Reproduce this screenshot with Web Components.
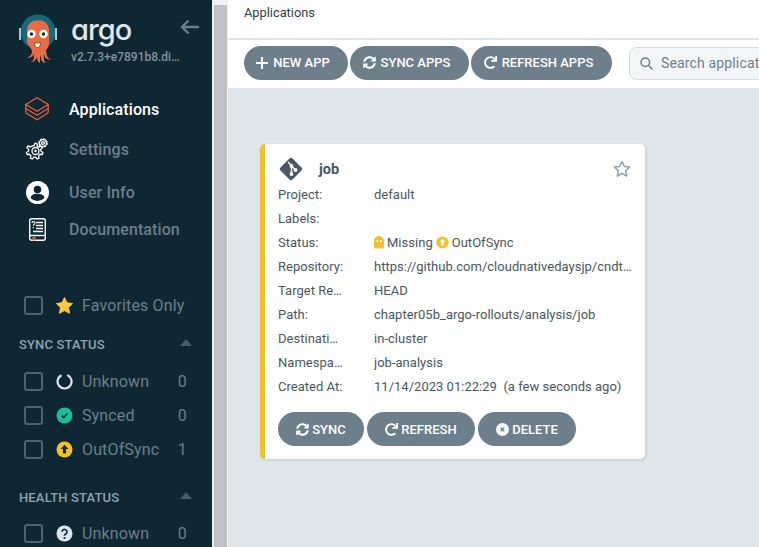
<!DOCTYPE html>
<html lang="en"><head><meta charset="utf-8"><title>Argo CD</title>
<style>
html,body{margin:0;height:100%;overflow:hidden;background:#fff;font-family:Roboto,"Liberation Sans",sans-serif}
</style></head><body>
<argo-app></argo-app>
<script>
const SYNC='M370.72 133.28C339.458 104.008 298.888 87.962 255.848 88c-77.458.068-144.328 53.178-162.791 126.85-1.344 5.363-6.122 9.15-11.651 9.15H24.103c-7.498 0-13.194-6.807-11.807-14.176C33.933 94.924 134.813 8 256 8c66.448 0 126.791 26.136 171.315 68.685L463.03 40.97C478.149 25.851 504 36.559 504 57.941V192c0 13.255-10.745 24-24 24H345.941c-21.382 0-32.09-25.851-16.971-40.971l41.75-41.749zM32 296h134.059c21.382 0 32.09 25.851 16.971 40.971l-41.75 41.75c31.262 29.273 71.835 45.319 114.876 45.28 77.418-.07 144.315-53.144 162.787-126.849 1.344-5.363 6.122-9.15 11.651-9.15h57.304c7.498 0 13.194 6.807 11.807 14.176C478.067 417.076 377.187 504 256 504c-66.448 0-126.791-26.136-171.315-68.685L48.97 471.03C33.851 486.149 8 475.441 8 454.059V320c0-13.255 10.745-24 24-24z';
const REDO='M500.33 0h-47.41a12 12 0 0 0-12 12.57l4 82.76A247.42 247.42 0 0 0 256 8C119.34 8 7.9 119.53 8 256.19 8.1 393.07 119.1 504 256 504a247.1 247.1 0 0 0 166.18-63.91 12 12 0 0 0 .48-17.43l-34-34a12 12 0 0 0-16.38-.55A176 176 0 1 1 402.1 157.8l-101.53-4.87a12 12 0 0 0-12.57 12v47.41a12 12 0 0 0 12 12h200.33a12 12 0 0 0 12-12V12a12 12 0 0 0-12-12z';
const fa=(d,s=13)=>`<svg slot="icon" width="${s}" height="${s}" viewBox="0 0 512 512" fill="#fff"><path d="${d}"/></svg>`;
const icons={
 plus:`<svg slot="icon" width="12" height="12" viewBox="0 0 12 12"><path d="M6 .5v11M.5 6h11" stroke="#fff" stroke-width="2" stroke-linecap="round"/></svg>`,
 sync:fa(SYNC),redo:fa(REDO),
 del:`<svg slot="icon" width="13" height="13" viewBox="0 0 13 13"><circle cx="6.5" cy="6.5" r="6.5" fill="#fff"/><path d="M4.7 4.7l3.6 3.6M8.3 4.7L4.7 8.3" stroke="#6d7f8b" stroke-width="1.3"/></svg>`,
 notch:`<svg width="17" height="17" viewBox="0 0 17 17"><path d="M11.2 2A7 7 0 1 1 5.5 2.2" fill="none" stroke="#dee6eb" stroke-width="2.2"/></svg>`,
 synced:`<svg width="17" height="17" viewBox="0 0 17 17"><circle cx="8.5" cy="8.5" r="8" fill="#18be94"/><path d="M5.6 8.6l2 2 3.8-4" fill="none" stroke="#10303d" stroke-width="1.5"/></svg>`,
 out:c=>`<svg width="17" height="17" viewBox="0 0 17 17"><circle cx="8.5" cy="8.5" r="8" fill="#f4c030"/><path d="M8.5 3.8l4 4.2H10v4.4H7V8H4.5z" fill="${c}"/></svg>`,
 help:`<svg width="17" height="17" viewBox="0 0 17 17"><circle cx="8.5" cy="8.5" r="8" fill="#dee6eb"/><path d="M6 6.8a2.5 2.4 0 1 1 3.8 2.1c-.9.5-1.3.9-1.3 1.8" fill="none" stroke="#10303d" stroke-width="1.7"/><circle cx="8.5" cy="13" r="1.1" fill="#10303d"/></svg>`
};
function define(name,css,html,init){
 customElements.define(name,class extends HTMLElement{
  connectedCallback(){
   if(this.shadowRoot)return;
   const r=this.attachShadow({mode:'open'});
   r.innerHTML=`<style>${css}</style>`+(typeof html==='function'?html(this):html);
   init&&init(r,this);
  }
 });
}
define('nav-item',`:host{display:flex;align-items:center;height:var(--h,40px);padding-left:24px;color:#6d7f8b;font-size:16px;font-weight:500;letter-spacing:.1px}
:host([active]){color:#fff}
.i{width:45px;display:flex;flex:none}`,`<div class="i"><slot name="icon"></slot></div><slot></slot>`);
define('filter-check',`:host{display:block;flex:none;width:15px;height:15px;border:2px solid #4f626e;border-radius:3px;box-sizing:content-box}`,``);
define('filter-row',`:host{display:flex;align-items:center;height:34px;padding-left:24px;color:#6d7f8b;font-size:16px;letter-spacing:.14px;width:188px;box-sizing:border-box;white-space:nowrap}
.i{width:17px;height:17px;margin:0 9px 0 13px;display:flex;flex:none}
.t{flex:1}
.c{padding-right:1px}`,t=>`<filter-check></filter-check><div class="i"><slot name="icon"></slot></div><span class="t"><slot></slot></span><span class="c">${t.getAttribute('count')||''}</span>`);
define('filter-head',`:host{display:flex;justify-content:space-between;align-items:center;height:20px;width:192px;padding-left:19px;box-sizing:border-box;color:#8fa4b1;font-size:13px;font-weight:500;letter-spacing:.15px}
i{width:0;height:0;border:6.5px solid transparent;border-top:0;border-bottom:7px solid #4a5a66;margin-top:-4px}`,`<span><slot></slot></span><i></i>`);
define('argo-logo',`:host{display:flex;height:89px;padding:14px 0 0 19px;box-sizing:border-box;color:#fff}
.w{margin-left:14px;width:110px;flex:none}
.a{font:500 29px/30px Inter,Roboto,sans-serif;font-feature-settings:"cv11";color:#dee6eb;height:30px;margin-top:1px;letter-spacing:-.9px}
.v{font-size:12px;font-weight:500;color:#8193a0;margin-top:5px;white-space:nowrap;overflow:hidden;text-overflow:ellipsis}
.b{flex:none;margin:5px 0 0 -1px}`,`
<svg width="38" height="50" viewBox="0 0 38 50" style="flex:none">
 <circle cx="19" cy="18" r="17.5" fill="#146a7b"/>
 <rect x="0" y="14" width="2" height="12" fill="#a6c6d6"/><rect x="36" y="14" width="2" height="12" fill="#a6c6d6"/>
 <path d="M8 16c0-13 22-13 22 0v14c0 3-2 5-3 6l1 6c1 2 2 3 4 3-2 1-5 0-6-2l-1-3 0 5c0 2 1 3 2 4-2 0-4-1-5-4l0-4-1 3c0 2 0 4 0 5-2-1-3-3-3-6l-1 2c-1 2-3 3-5 3 2-1 3-3 3-5l0-3c-1 2-3 4-7 4 2-1 5-3 5-7 0-1-1-2-2-4-2-2-3-4-3-6z" fill="#e96d44"/>
 <circle cx="12.5" cy="20" r="4.2" fill="#fff"/><circle cx="24.5" cy="20" r="4.2" fill="#fff"/>
 <circle cx="12.5" cy="20" r="1.7" fill="#222"/><circle cx="24.5" cy="20" r="1.7" fill="#222"/>
 <path d="M15.5 29h6c0 3-1.5 4.5-3 4.5s-3-1.5-3-4.5z" fill="#fff" stroke="#3a1d12" stroke-width=".6"/>
</svg>
<div class="w"><div class="a">argo</div><div class="v">v2.7.3+e7891b8.dirty</div></div>
<svg class="b" width="19" height="16" viewBox="0 0 19 16"><path d="M8.5 1.5L2 8l6.5 6.5M2 8h17" fill="none" stroke="#6d7f8b" stroke-width="2.4"/></svg>`);
const gear=`<svg slot="icon" width="24" height="24" viewBox="0 0 24 24" fill="none" stroke="#fff" stroke-width="1.3" style="margin:0 0 0 1px">
<path d="M10 6.5l1-2.3 2 .4.3 2.4 1.6.9 2.2-1 1.2 1.7-1.600 1.800.2 1.800 2 1.300-.7 2-2.400-.2-1.200 1.400.4 2.400-1.900.9-1.500-1.900-1.800 0-1.500 1.900-1.900-.9.4-2.400-1.200-1.400-2.400.2-.7-2 2-1.300.2-1.800L2.900 8.600 4.100 6.900l2.200 1 1.600-.9z" transform="translate(-1 1)"/>
<circle cx="10.5" cy="13" r="3.5"/><circle cx="10.5" cy="13" r="1.3" fill="#fff" stroke="none"/>
<circle cx="18" cy="5" r="3.7" fill="#0e2733"/><circle cx="18" cy="5" r="1.4"/><circle cx="18" cy="5" r="3.7" stroke-dasharray="1.6 1.3" stroke-width="2"/></svg>`;
define('argo-sidebar',`:host{display:block;width:212px;height:547px;flex:none;background:#0e2733;overflow:hidden}
nav{display:block;margin-bottom:44px}
.g1{margin-top:12px}.r1{margin-top:10px}.g2{margin-top:21px}.r2{margin-top:9px}`,`
<argo-logo></argo-logo>
<nav>
<nav-item active style="--h:40px"><svg slot="icon" width="24" height="24" viewBox="0 0 24 24" fill="none" stroke="#e9603e" stroke-width="1.3" style="margin-left:1px"><path d="M12 .8L23.2 7.5 12 14.2 .8 7.5zM.8 11.5L12 18.2 23.2 11.5M.8 15.7L12 22.8 23.2 15.7M.8 7.5v8.200M23.200 7.500v8.200"/></svg>Applications</nav-item>
<nav-item style="--h:41px">${gear}Settings</nav-item>
<nav-item style="--h:44px"><svg slot="icon" width="23" height="23" viewBox="0 0 23 23" style="margin-left:2px"><circle cx="11.5" cy="11.5" r="11.5" fill="#fff"/><circle cx="11.5" cy="8.5" r="3.8" fill="#0e2733"/><path d="M4.8 16.500c0-5 13.400-5 13.400 0v.8a9.500 9.500 0 0 1-13.400 0z" fill="#0e2733"/></svg>User Info</nav-item>
<nav-item style="--h:30px"><svg slot="icon" width="17" height="23" viewBox="0 0 17 23" style="margin-left:5px"><rect x=".7" y=".7" width="15.6" height="21.6" rx="2" fill="#0e2733" stroke="#fff" stroke-width="1.4"/><path d="M1 17.5h15M7 4.500h7M7 7.500h7M7 10.500h7M4 13.500h10" stroke="#fff" stroke-width="1.3"/><path d="M3 5a1.500 1.500 0 1 1 2 1.500c-.5.200-.7.500-.7 1.200M4.300 9v1.200" fill="none" stroke="#fff" stroke-width="1.1"/><rect x="3.5" y="19" width="3" height="3.5" fill="#e9603e"/></svg>Documentation</nav-item>
</nav>
<filter-row><svg slot="icon" width="17" height="17" viewBox="0 0 17 17"><path d="M8.5 .6l2.500 5.200 5.600.8-4.100 4 1 5.700-5-2.700-5 2.700 1-5.700-4.100-4 5.600-.8z" fill="#ffc83d" stroke="#ffc83d" stroke-linejoin="round"/></svg>Favorites Only</filter-row>
<filter-head class="g1">SYNC STATUS</filter-head>
<div class="r1">
<filter-row count="0"><span slot="icon" style="display:flex">${icons.notch}</span>Unknown</filter-row>
<filter-row count="0"><span slot="icon" style="display:flex">${icons.synced}</span>Synced</filter-row>
<filter-row count="1"><span slot="icon" style="display:flex">${icons.out('#10303d')}</span>OutOfSync</filter-row>
</div>
<filter-head class="g2">HEALTH STATUS</filter-head>
<div class="r2"><filter-row count="0"><span slot="icon" style="display:flex">${icons.help}</span>Unknown</filter-row></div>`);
define('side-scrollbar',`:host{display:block;width:16px;height:547px;flex:none;background:#f1f1f1;padding:5px 1px 0 2px;box-sizing:border-box}
div{height:100%;background:#c1c1c1}`,`<div></div>`);
define('argo-button',`:host{display:inline-flex;align-items:center;justify-content:center;gap:var(--g,5px);height:34px;border-radius:17px;background:#6d7f8b;color:#fff;font-size:13px;font-weight:500;padding:0 calc(13px + var(--x,0px)) 0 13px;box-sizing:border-box;white-space:nowrap;flex:none;width:var(--w,auto)}
::slotted(svg){flex:none}`,`<slot name="icon"></slot><slot></slot>`);
define('search-box',`:host{display:flex;align-items:center;flex:none;width:220px;height:33px;margin:1px 0 0 14px;background:#f3f6f8;border:1px solid #d5dee4;border-radius:7px;box-sizing:border-box;padding-left:10px;color:#6d7f8b;font-size:14px;letter-spacing:.15px;white-space:nowrap}
svg{margin-right:8px;flex:none}`,`<svg width="13" height="13" viewBox="0 0 13 13" fill="none" stroke="#6d7f8b" stroke-width="1.5"><circle cx="5.3" cy="5.3" r="4.3"/><path d="M8.5 8.5l4 4"/></svg><slot></slot>`);
define('card-row',`:host{display:flex;height:24px;align-items:center;font-size:13px;color:#495763;letter-spacing:.02px}
.l{width:66px;margin-right:30px;flex:none;overflow:hidden;white-space:nowrap;text-overflow:ellipsis}
.v{flex:1;min-width:0;margin-right:-4px;overflow:hidden;white-space:pre;text-overflow:ellipsis;display:block}`,t=>`<div class="l">${t.getAttribute('label')}</div><div class="v"><slot></slot></div>`);
define('app-card',`:host{display:block;width:385px;height:315px;background:#fff;border-left:5px solid #f4c030;border-radius:5px;box-sizing:border-box;padding:13px 14px 13px 13px;box-shadow:1px 1px 3px rgba(0,0,0,.13)}
.h{display:flex;align-items:center;height:24px;margin-bottom:1px;color:#495763;font-size:14.5px;font-weight:700}
.h span{flex:1;margin-left:16px}
.a{display:flex;gap:3px;margin-top:14px}`,`
<div class="h"><svg width="24" height="24" viewBox="0 0 24 24" style="margin-left:1px;flex:none"><rect x="3.5" y="3.5" width="17" height="17" rx="2.2" transform="rotate(45 12 12)" fill="#495763"/><path d="M9 5l3.5 3.5v8.5M12.5 9l4 4" stroke="#fff" stroke-width="1.5" fill="none"/><circle cx="12.5" cy="9" r="1.9" fill="#fff"/><circle cx="12.5" cy="17" r="1.9" fill="#fff"/><circle cx="16.5" cy="13" r="1.9" fill="#fff"/></svg><span><slot name="title"></slot></span>
<svg width="18" height="18" viewBox="0 0 18 18" style="flex:none"><path d="M9 1.5l2.3 4.900 5.300.7-3.900 3.700 1 5.300L9 13.500l-4.700 2.600 1-5.300-3.900-3.700 5.300-.7z" fill="none" stroke="#8fa4b1" stroke-width="1.5" stroke-linejoin="round"/></svg></div>
<slot></slot><div class="a"><slot name="actions"></slot></div>`);
define('status-line',`:host{display:inline-flex;align-items:center;height:24px}
svg{flex:none}`,`<svg width="10" height="13" viewBox="0 0 10 13" style="margin-right:3px"><path d="M0 13V5a5 5 0 0 1 10 0v8l-1.700-1.500L6.700 13 5 11.500 3.300 13 1.700 11.500z" fill="#f4c030"/><circle cx="3.3" cy="5" r="1" fill="#fff"/><circle cx="6.7" cy="5" r="1" fill="#fff"/></svg>Missing<span style="display:flex;margin:0 3px 0 3px">${icons.out('#fff').replace(/width="17" height="17"/,'width="13" height="13"')}</span>OutOfSync`);
define('argo-main',`:host{display:block;flex:1;min-width:0;height:547px;background:#dee6eb;overflow:hidden}
.t{height:38px;background:#fff;padding:5px 0 0 16px;box-sizing:border-box;font-size:12.8px;line-height:15px;color:#363c4a}
.b{height:48px;margin-top:2px;background:#fff;display:flex;align-items:center;gap:3px;padding:0 0 3px 16px;box-sizing:border-box;overflow:hidden}
.c{padding:56px 0 0 32px}`,`
<div class="t">Applications</div>
<div class="b"><argo-button style="--w:104px;--x:6px">${icons.plus}NEW APP</argo-button><argo-button style="--w:119px;margin-left:-1px;--x:6px">${icons.sync}SYNC APPS</argo-button><argo-button style="--w:141px;margin-left:-1px;--x:6px">${icons.redo}REFRESH APPS</argo-button><search-box>Search applications...</search-box></div>
<div class="c"><app-card>
<span slot="title">job</span>
<card-row label="Project:">default</card-row>
<card-row label="Labels:"></card-row>
<card-row label="Status:"><status-line></status-line></card-row>
<card-row label="Repository:">https://github.com/cloudnativedaysjp/cndt2023-handson</card-row>
<card-row label="Target Revision:">HEAD</card-row>
<card-row label="Path:">chapter05b_argo-rollouts/analysis/job</card-row>
<card-row label="Destination:">in-cluster</card-row>
<card-row label="Namespace:">job-analysis</card-row>
<card-row label="Created At:">11/14/2023 01:22:29  (a few seconds ago)</card-row>
<argo-button slot="actions" style="--w:86px;--g:3px">${icons.sync}SYNC</argo-button>
<argo-button slot="actions" style="--w:108px;--g:3px">${icons.redo}REFRESH</argo-button>
<argo-button slot="actions" style="--w:98px;--g:3px">${icons.del}DELETE</argo-button>
</app-card></div>`);
define('argo-app',`:host{display:flex;width:759px;height:547px;overflow:hidden}`,`<argo-sidebar></argo-sidebar><side-scrollbar></side-scrollbar><argo-main></argo-main>`);
</script></body></html>
